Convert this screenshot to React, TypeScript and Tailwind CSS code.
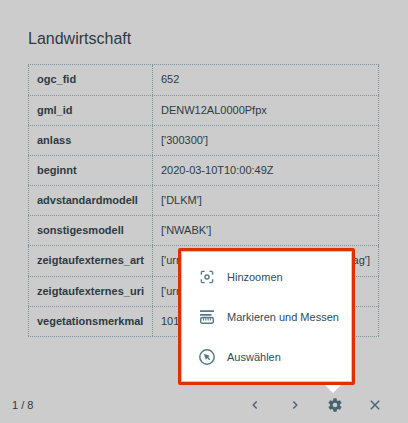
import React from 'react';

type Row = { name: string; value: string; end?: string; tall?: boolean };

const rows: Row[] = [
  { name: 'ogc_fid', value: '652', tall: true },
  { name: 'gml_id', value: 'DENW12AL0000Pfpx' },
  { name: 'anlass', value: "['300300']" },
  { name: 'beginnt', value: '2020-03-10T10:00:49Z' },
  { name: 'advstandardmodell', value: "['DLKM']" },
  { name: 'sonstigesmodell', value: "['NWABK']" },
  { name: 'zeigtaufexternes_art', value: "['urn", end: "ag']", tall: true },
  { name: 'zeigtaufexternes_uri', value: "['urn" },
  { name: 'vegetationsmerkmal', value: '101' },
];

function ZoomIcon() {
  return (
    <svg width="14" height="14" viewBox="0 0 14 14" fill="none" stroke="#557a88" strokeWidth="1.4">
      <path d="M1.4 4.8V2.4a1 1 0 0 1 1-1H4.6M9.4 1.4h2.2a1 1 0 0 1 1 1v2.4M12.6 9.2v2.4a1 1 0 0 1-1 1H9.4M4.6 12.6H2.4a1 1 0 0 1-1-1V9.2" />
      <circle cx="7" cy="7" r="2" />
    </svg>
  );
}

function MeasureIcon() {
  return (
    <svg width="14" height="14" viewBox="0 0 14 14" fill="none" stroke="#557a88" strokeWidth="1.4">
      <path d="M0 1.2h14M0 4.8h11.5" strokeWidth="1.7" />
      <rect x="0.7" y="7.5" width="12.6" height="5.7" rx="1.4" />
      <path d="M3.5 7.5v3M5.8 7.5v3M8.1 7.5v3M10.4 7.5v3" strokeWidth="1.1" />
    </svg>
  );
}

function SelectIcon() {
  return (
    <svg width="16" height="16" viewBox="0 0 16 16">
      <circle cx="8" cy="8" r="7.2" fill="none" stroke="#557a88" strokeWidth="1.5" />
      <path d="M4.8 4.8 11.1 7 9.1 8.1l2.2 2.2-1 1-2.2-2.2L7 11.1z" fill="#527886" />
    </svg>
  );
}

const actions = [
  { label: 'Hinzoomen', icon: <ZoomIcon /> },
  { label: 'Markieren und Messen', icon: <MeasureIcon /> },
  { label: 'Auswählen', icon: <SelectIcon /> },
];

export default function App() {
  return (
    <div className="relative flex h-[423px] w-[408px] flex-col overflow-hidden bg-[#cccccc] font-['Liberation_Sans',Arial,sans-serif] text-[11px] text-[#2c3b42]">
      <h1 className="mt-[27px] ml-7 h-[37px] text-[16px] leading-[23px]">Landwirtschaft</h1>
      <div className="ml-7 w-[351px] border-b border-dotted border-[#7d959e]">
        {rows.map((row) => (
          <div
            key={row.name}
            className={`grid grid-cols-[125px_226px] border-t border-dotted border-[#7d959e] ${row.tall ? 'h-[31px]' : 'h-[30px]'}`}
          >
            <div className="border-x border-dotted border-[#7d959e] pl-2 leading-[29px] font-bold">{row.name}</div>
            <div className="flex justify-between border-r border-dotted border-[#7d959e] px-2 leading-[29px]">
              <span>{row.value}</span>
              {row.end && <span>{row.end}</span>}
            </div>
          </div>
        ))}
      </div>
      <footer className="mt-auto flex h-9 items-center justify-between pr-[13px] pl-3">
        <span>1 / 8</span>
        <div className="flex text-[#486471]">
          <button className="flex h-10 w-10 items-center justify-center">
            <svg width="8" height="10" viewBox="0 0 8 10" fill="none" stroke="currentColor" strokeWidth="1.4"><path d="M5.7 1.5 2.2 5l3.5 3.5" /></svg>
          </button>
          <button className="flex h-10 w-10 items-center justify-center">
            <svg width="8" height="10" viewBox="0 0 8 10" fill="none" stroke="currentColor" strokeWidth="1.4"><path d="M2.3 1.5 5.8 5 2.3 8.5" /></svg>
          </button>
          <button className="flex h-10 w-10 items-center justify-center">
            <svg width="16" height="16" viewBox="0 0 24 24" fill="currentColor"><path d="M12 15.5A3.5 3.5 0 0 1 8.5 12 3.5 3.5 0 0 1 12 8.500a3.5 3.5 0 0 1 3.500 3.500 3.5 3.5 0 0 1-3.500 3.500m7.430-2.530c.040-.320.070-.640.070-.970s-.030-.660-.070-1l2.110-1.630c.190-.150.240-.420.120-.640l-2-3.460c-.120-.220-.390-.310-.610-.220l-2.490 1c-.520-.390-1.060-.730-1.690-.980l-.370-2.650A.506.506 0 0 0 14 2h-4c-.250 0-.460.180-.500.420l-.370 2.650c-.630.250-1.170.590-1.690.980l-2.490-1c-.220-.090-.490 0-.610.220l-2 3.460c-.130.220-.070.490.120.640L4.570 11c-.040.340-.070.670-.070 1s.030.650.070.970l-2.110 1.660c-.190.150-.250.420-.120.640l2 3.460c.120.220.390.300.610.220l2.490-1.010c.520.400 1.060.740 1.690.990l.370 2.650c.040.240.250.420.500.420h4c.250 0 .460-.180.500-.420l.370-2.650c.630-.260 1.170-.590 1.690-.990l2.490 1.010c.220.080.490 0 .610-.220l2-3.460c.120-.220.070-.490-.120-.640z" /></svg>
          </button>
          <button className="flex h-10 w-10 items-center justify-center">
            <svg width="10" height="10" viewBox="0 0 10 10" stroke="currentColor" strokeWidth="1.4"><path d="m.8.8 8.4 8.4M9.2.8.8 9.2" /></svg>
          </button>
        </div>
      </footer>
      <div className="absolute top-[248px] left-[178px] h-[137px] w-[177px] rounded-[2px] border-[3px] border-[#e03000] bg-white pt-[6px] shadow-[inset_0_0_0_1px_#ffb7a0]">
        {actions.map((action) => (
          <div key={action.label} className="flex h-10 items-center">
            <span className="ml-4 flex w-5 justify-center">{action.icon}</span>
            <span className="ml-[10px] whitespace-nowrap text-[#2f4c5a]">{action.label}</span>
          </div>
        ))}
      </div>
      <svg className="absolute top-[385px] left-[325px]" width="16" height="8" viewBox="0 0 16 8"><path d="M0 0h16L8 8z" fill="white" /></svg>
    </div>
  );
}
